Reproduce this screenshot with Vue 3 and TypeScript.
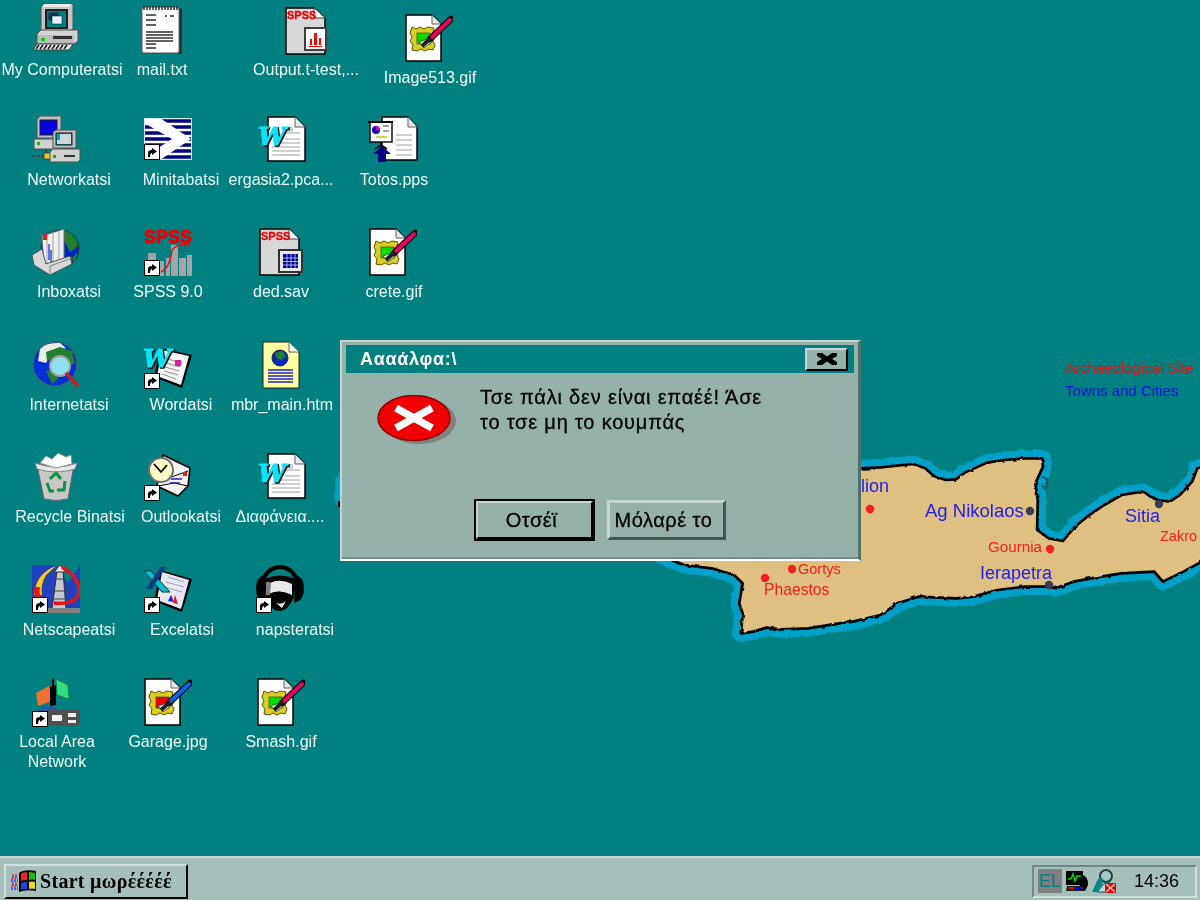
<template>
  <div class="screen">
    <!-- icon sheet, referenced with <use> below -->
    <svg class="sheet" width="0" height="0">
      <defs>
        <filter id="rough" x="-5%" y="-5%" width="110%" height="110%">
          <feTurbulence type="fractalNoise" baseFrequency="0.05" numOctaves="2" seed="4" result="n" />
          <feDisplacementMap in="SourceGraphic" in2="n" scale="9" />
        </filter>

        <symbol id="shortcut" viewBox="0 0 16 16">
          <rect x="0.5" y="0.5" width="15" height="15" fill="#fff" stroke="#000" />
          <path d="M4 13 V9 Q4 6 8 6 V4 L13 7.5 L8 11 V9 Q6 9 6 13 Z" fill="#000" />
        </symbol>

        <symbol id="computer" viewBox="0 0 48 48">
          <path d="M9 4 L12 1 H41 V26 L38 28 H9 Z" fill="#c4c4c4" stroke="#505050" />
          <path d="M12 1 H40 L37 4 H10 Z" fill="#ececec" />
          <rect x="13" y="6" width="23" height="20" fill="#202020" />
          <rect x="15" y="8" width="19" height="16" fill="#008080" />
          <rect x="17" y="10" width="9" height="7" fill="#103060" stroke="#101010" stroke-width=".5" />
          <rect x="20" y="13" width="10" height="8" fill="#e8f0ff" stroke="#101010" stroke-width=".5" />
          <path d="M5 31 L9 27 H46 V38 L42 41 H5 Z" fill="#d4d4d4" stroke="#505050" />
          <rect x="6" y="32" width="36" height="8" fill="#bcbcbc" />
          <rect x="9" y="35" width="4" height="3" fill="#00d000" />
          <rect x="21" y="33" width="19" height="3" fill="#303030" />
          <path d="M5 41 L1 47 H37 L41 41 Z" fill="#e4e4e4" stroke="#404040" />
          <path d="M7 42 L4 46 M11 42 L8 46 M15 42 L12 46 M19 42 L16 46 M23 42 L20 46 M27 42 L24 46 M31 42 L28 46 M35 42 L32 46" stroke="#202020" stroke-width="1.6" />
        </symbol>

        <symbol id="notepad" viewBox="0 0 42 50">
          <rect x="3" y="3" width="38" height="46" rx="2" fill="#303030" />
          <rect x="1" y="2" width="37" height="46" rx="2" fill="#fff" stroke="#606060" />
          <path d="M3 1 V5 M6 1 V5 M9 1 V5 M12 1 V5 M15 1 V5 M18 1 V5 M21 1 V5 M24 1 V5 M27 1 V5 M30 1 V5 M33 1 V5 M36 1 V5" stroke="#202020" stroke-width="1.4" />
          <path d="M5 10 H15 M5 15 H15 M5 20 H15 M5 27 H32 M5 30 H32 M5 33 H32 M5 36 H32 M5 39 H15 M5 43 H15" stroke="#303030" stroke-width="1.6" />
          <path d="M24 11 H26 M29 11 H33" stroke="#303030" stroke-width="1.6" />
        </symbol>

        <symbol id="network" viewBox="0 0 50 48">
          <path d="M6 3 L9 0 H30 V22 H6 Z" fill="#c0c0c0" stroke="#505050" />
          <rect x="9" y="4" width="17" height="15" fill="#0000e0" stroke="#202020" />
          <rect x="3" y="23" width="27" height="10" fill="#d0d0d0" stroke="#505050" />
          <rect x="6" y="26" width="3" height="3" fill="#00c000" />
          <path d="M15 33 V39" stroke="#404040" stroke-width="2" />
          <path d="M1 40 H14 M20 40 H24" stroke="#404040" stroke-width="2" stroke-dasharray="2 1" />
          <rect x="13" y="37" width="7" height="6" fill="#e8d020" stroke="#404040" />
          <path d="M22 16 L25 14 H45 V32 H22 Z" fill="#c0c0c0" stroke="#505050" />
          <rect x="25" y="17" width="16" height="12" fill="#008080" stroke="#202020" />
          <rect x="26" y="18" width="14" height="10" fill="#c8d8d8" />
          <rect x="26" y="18" width="3" height="6" fill="#00a8a8" />
          <path d="M19 36 L22 33 H49 V44 L47 46 H19 Z" fill="#d0d0d0" stroke="#505050" />
          <rect x="22" y="39" width="3" height="3" fill="#00c000" />
          <rect x="33" y="39" width="11" height="2" fill="#303030" />
        </symbol>

        <symbol id="minitab" viewBox="0 0 48 42">
          <rect x="0" y="0" width="48" height="42" fill="#fff" />
          <path d="M1 3 H47 M1 9 H47 M1 15 H47 M1 21 H47 M1 27 H47 M1 33 H47 M1 39 H47" stroke="#000080" stroke-width="3.6" />
          <path d="M0 0 H16 L47 21 L16 42 H0 V39 L28 21 L0 5 Z" fill="#fff" />
          <rect x="0.5" y="0.5" width="47" height="41" fill="none" stroke="#d8e8e8" />
        </symbol>

        <symbol id="spss-chart" viewBox="0 0 42 48">
          <path d="M1 1 H29 L40 11 V47 H1 Z" fill="#d8d8d8" stroke="#000" stroke-width="1.5" />
          <path d="M29 1 V11 H40" fill="#fff" stroke="#404040" />
          <text x="2" y="12" class="spss-word">SPSS</text>
          <rect x="20" y="21" width="21" height="22" fill="#fff" stroke="#404040" stroke-width="2" />
          <path d="M25 38 V32 H27 V38 Z M29 38 V26 H32 V38 Z M34 38 V31 H36 V38 Z M24 39 H37 V40 H24 Z" fill="#f00" />
        </symbol>

        <symbol id="spss-table" viewBox="0 0 44 48">
          <path d="M1 1 H30 L40 11 V47 H1 Z" fill="#d8d8d8" stroke="#000" stroke-width="1.5" />
          <path d="M30 1 V11 H40" fill="#fff" stroke="#404040" />
          <text x="2" y="12" class="spss-word">SPSS</text>
          <rect x="20" y="22" width="23" height="22" fill="#e8e8e8" stroke="#303030" stroke-width="2" />
          <rect x="24" y="26" width="15" height="14" fill="#000090" />
          <path d="M24 30 H39 M24 33.5 H39 M24 37 H39 M28 26 V40 M32 26 V40 M36 26 V40" stroke="#c8d0ff" stroke-width=".8" />
        </symbol>

        <symbol id="word-doc" viewBox="0 0 48 46">
          <path d="M10 1 H37 L47 11 V45 H10 Z" fill="#fff" stroke="#000" stroke-width="1.5" />
          <path d="M37 1 V11 H47" fill="#e8e8e8" stroke="#606060" />
          <path d="M27 17 H42 M27 23 H42 M20 27 H42 M14 31 H42 M14 35 H42 M14 39 H42" stroke="#a0a0a0" />
          <rect x="29" y="11" width="6" height="6" fill="#d0d0d0" />
          <text x="1.2" y="30.2" class="word-w word-w--back">W</text>
          <text x="0" y="29" class="word-w">W</text>
        </symbol>

        <symbol id="pps" viewBox="0 0 50 46">
          <path d="M14 1 H40 L49 11 V44 H14 Z" fill="#fff" stroke="#000" stroke-width="1.5" />
          <path d="M40 1 V11 H49" fill="#e8e8e8" stroke="#606060" />
          <path d="M28 19 H44 M28 24 H44 M28 29 H44 M28 34 H44 M28 39 H44" stroke="#a0a0a0" />
          <rect x="2" y="6" width="22" height="20" fill="#fff" stroke="#000" stroke-width="1.4" />
          <path d="M0 6 H25" stroke="#000" stroke-width="2" />
          <circle cx="8" cy="14" r="4" fill="#2000c0" />
          <path d="M8 14 V10 A4 4 0 0 1 12 14 Z" fill="#e000c0" />
          <path d="M15 10 H21 M15 15 H21" stroke="#808080" stroke-width="1.4" />
          <path d="M8 21 H19" stroke="#c0c000" stroke-width="1.4" />
          <path d="M13 26 V31 M7 33 L13 29 L19 33" stroke="#000" stroke-width="1.6" fill="none" />
          <path d="M14 30 L23 38 H18 V46 H10 V38 H5 Z" fill="#000080" />
        </symbol>

        <symbol id="frame" viewBox="0 0 48 48">
          <path d="M1 1 H27 L36 10 V47 H1 Z" fill="#fff" stroke="#000" stroke-width="1.5" />
          <path d="M27 1 V10 H36" fill="#e8e8e8" stroke="#606060" />
          <path d="M7 13 L11 15 L15 13 L19 15 L23 13 L29 14 L28 19 L30 23 L28 27 L30 31 L28 36 L24 35 L20 37 L16 35 L12 37 L7 36 L8 31 L5 27 L7 23 L5 19 Z" fill="#d8d020" stroke="#605000" />
        </symbol>

        <symbol id="image-pink" viewBox="0 0 48 48">
          <use href="#frame" width="48" height="48" />
          <rect x="12" y="19" width="13" height="11" fill="#00e000" stroke="#303000" stroke-width=".6" />
          <path d="M14 28 L25 24 L28 27 L19 34 Z" fill="#f0f0f0" stroke="#202020" stroke-width=".7" />
          <path d="M25 25 L46 5" stroke="#000" stroke-width="6.5" stroke-linecap="round" />
          <path d="M27 23 L45 6" stroke="#f00060" stroke-width="4" stroke-linecap="round" />
          <path d="M17 32 L26 24" stroke="#202020" stroke-width="4" />
        </symbol>

        <symbol id="image-blue" viewBox="0 0 48 48">
          <use href="#frame" width="48" height="48" />
          <rect x="12" y="19" width="13" height="11" fill="#f00000" stroke="#303000" stroke-width=".6" />
          <path d="M14 28 L25 24 L28 27 L19 34 Z" fill="#f0f0f0" stroke="#202020" stroke-width=".7" />
          <path d="M25 25 L46 5" stroke="#000" stroke-width="6.5" stroke-linecap="round" />
          <path d="M27 23 L45 6" stroke="#0068f0" stroke-width="4" stroke-linecap="round" />
          <path d="M17 32 L26 24" stroke="#202020" stroke-width="4" />
        </symbol>

        <symbol id="inbox" viewBox="0 0 48 48">
          <circle cx="28" cy="21" r="19" fill="#0028c0" stroke="#303030" />
          <path d="M28 2 Q44 4 46 18 L38 24 L32 12 Z" fill="#208030" />
          <path d="M40 30 L46 24 L42 36 Z" fill="#208030" />
          <path d="M10 8 L32 1 V34 L12 38 Z" fill="#f0f0f0" stroke="#707070" />
          <path d="M15 6 V36 M21 4 V36 M27 3 V35" stroke="#a0a0a0" />
          <rect x="11" y="6" width="4" height="6" fill="#e02020" />
          <path d="M17 16 V32 M19 22 V34" stroke="#2040e0" stroke-width="1.4" />
          <path d="M0 27 L10 21 L14 36 L38 28 L40 36 L18 47 L2 37 Z" fill="#d8d8d8" stroke="#505050" />
          <path d="M18 47 V38 L40 30" fill="none" stroke="#808080" />
        </symbol>

        <symbol id="spss-logo" viewBox="0 0 48 48">
          <path d="M4 25 H12 V48 H4 Z M15 33 H20 V48 H15 Z M22 30 H26 V48 H22 Z M27 17 H34 V48 H27 Z M35 30 H42 V48 H35 Z M43 27 H48 V48 H43 Z" fill="#a4a4a4" />
          <path d="M17 44 Q26 40 28 22 Q32 16 46 16" fill="none" stroke="#e01010" stroke-width="1.4" />
          <path d="M36 21 h1 M40 20 h1 M44 19 h1 M42 23 h1 M38 24 h1" stroke="#303030" />
          <text x="0" y="15" class="spss-big">SPSS</text>
        </symbol>

        <symbol id="globe" viewBox="0 0 48 48">
          <circle cx="23" cy="23" r="22" fill="#0030d8" stroke="#606060" />
          <path d="M8 8 Q14 1 28 2 L34 7 L20 12 L14 22 L6 20 Z" fill="#e8f0e8" />
          <path d="M14 11 L28 6 L40 10 L43 22 L32 28 L22 18 L15 20 Z" fill="#208030" />
          <path d="M14 30 L22 28 L26 38 L20 43 Z" fill="#208030" />
          <circle cx="28" cy="25" r="10" fill="#90e0f0" stroke="#a0a0a0" stroke-width="2" />
          <path d="M35 33 L45 44" stroke="#c02020" stroke-width="4" stroke-linecap="round" />
        </symbol>

        <symbol id="word-link" viewBox="0 0 48 48">
          <path d="M16 7 L48 14 L38 47 L10 36 Z" fill="#000" />
          <path d="M18 9 L45 15 L37 44 L13 35 Z" fill="#f4f4f4" />
          <path d="M24 18 L38 22 M22 22 L36 26 M21 26 L35 30 M20 30 L34 34 M18 33 L32 38" stroke="#909090" />
          <rect x="31" y="19" width="6" height="6" fill="#e020a0" />
          <text x="0.2" y="27.2" class="word-w word-w--back">W</text>
          <text x="-1" y="26" class="word-w">W</text>
        </symbol>

        <symbol id="html-doc" viewBox="0 0 38 48">
          <path d="M1 1 H27 L37 11 V47 H1 Z" fill="#ffffa0" stroke="#202020" />
          <path d="M27 1 V11 H37" fill="#fff" stroke="#606060" />
          <circle cx="18" cy="17" r="8" fill="#0028c8" stroke="#303030" />
          <path d="M13 12 L20 10 L24 15 L19 19 L14 17 Z" fill="#208030" />
          <path d="M6 29 H31 M6 32 H31 M6 35 H31 M6 38 H31 M6 41 H31" stroke="#2020e0" stroke-width="1.6" />
        </symbol>

        <symbol id="recycle" viewBox="0 0 44 48">
          <path d="M3 12 L40 12 L34 46 Q22 49 10 46 Z" fill="#c8c8c8" stroke="#606060" />
          <path d="M1 10 Q22 18 43 10 L41 16 Q22 22 3 16 Z" fill="#e8e8e8" stroke="#808080" />
          <path d="M6 10 L12 3 L18 6 L24 0 L32 4 L37 2 L38 11 L22 15 Z" fill="#fff" stroke="#909090" />
          <path d="M16 26 L22 20 L27 26 M31 28 L30 37 L23 37 M13 30 L16 38 L20 38" fill="none" stroke="#109040" stroke-width="3" />
        </symbol>

        <symbol id="outlook" viewBox="0 0 48 48">
          <path d="M19 2 L46 15 L44 33 L34 43 L13 33 Z" fill="#f4f4f4" stroke="#000" stroke-width="1.6" />
          <path d="M22 26 L44 18 M14 33 L30 30 L44 33" fill="none" stroke="#000" />
          <path d="M27 26 H38 M26 30 H36" stroke="#2020c0" stroke-width="1.6" />
          <rect x="39" y="19" width="4" height="4" fill="#e02020" />
          <circle cx="17" cy="17" r="12" fill="#ffffc8" stroke="#707070" stroke-width="2" />
          <path d="M10 11 L17 19 L23 12" fill="none" stroke="#000" stroke-width="1.8" />
        </symbol>

        <symbol id="netscape" viewBox="0 0 48 48">
          <rect x="0" y="0" width="48" height="48" fill="#2040c0" />
          <path d="M24 0 L48 0 L36 18 Z" fill="#008080" />
          <path d="M2 30 Q4 8 24 1 L14 10 Q8 20 10 30 Z" fill="#ffd000" />
          <path d="M2 22 Q2 40 14 42 L12 38 Q6 30 8 22 Z" fill="#f01010" />
          <path d="M20 44 L25 6 L31 6 L34 44 Z" fill="#c8c8c8" stroke="#303030" />
          <path d="M22 7 L28 0 L34 7 Z" fill="#e8e8e8" stroke="#303030" />
          <path d="M23 14 H33 M22 26 H33 M22 34 H34" stroke="#404040" />
          <path d="M30 2 Q47 12 47 26 Q46 40 22 38" fill="none" stroke="#f01010" stroke-width="3.5" />
          <rect x="0" y="43" width="48" height="5" fill="#808080" />
        </symbol>

        <symbol id="excel-link" viewBox="0 0 48 48">
          <path d="M16 5 L48 14 L38 47 L10 36 Z" fill="#000" />
          <path d="M18 7 L45 15 L37 44 L13 35 Z" fill="#e8e8f0" />
          <path d="M24 12 L40 17 M22 17 L40 22 M20 22 L38 27" stroke="#a0a0c0" />
          <path d="M24 36 L27 30 L30 37 Z" fill="#2020d0" />
          <path d="M29 38 L31 30 L34 39 Z" fill="#e02020" />
          <path d="M0 6 L7 6 L26 27 L18 27 Z" fill="#00c0d0" stroke="#003040" />
          <path d="M16 2 L22 2 L8 24 L2 24 Z" fill="#004080" />
        </symbol>

        <symbol id="napster" viewBox="0 0 48 48">
          <path d="M6 22 Q8 3 24 2 Q40 3 42 22" fill="none" stroke="#000" stroke-width="4" />
          <path d="M0 24 Q0 12 8 10 L10 38 Q0 36 0 24 Z M48 24 Q48 12 40 10 L38 38 Q48 36 48 24 Z" fill="#000" />
          <path d="M8 14 Q24 7 40 14 L38 32 Q32 46 24 46 Q14 46 10 32 Z" fill="#000" />
          <path d="M14 18 Q24 13 36 19 L36 30 Q24 24 12 29 Z" fill="#e8e8e8" />
          <path d="M10 17 Q13 16 15 18 L14 30 L10 30 Z" fill="#808080" />
          <path d="M16 28 Q24 24 34 30 L26 34 Z" fill="#000" />
          <path d="M20 38 Q26 40 30 36 L26 43 Z" fill="#e8e8e8" />
        </symbol>

        <symbol id="lan" viewBox="0 0 48 50">
          <path d="M4 16 L17 9 L20 24 L6 29 Z" fill="#f07030" />
          <path d="M5 31 L19 27 L26 32 L12 38 Z" fill="#2060a0" />
          <path d="M18 10 L24 8 V28 L18 29 Z" fill="#000" />
          <path d="M24 2 L36 8 L37 22 L25 18 Z" fill="#30e080" stroke="#006030" stroke-width=".6" />
          <path d="M20 3 L22 1 V26 H20 Z" fill="#000" />
          <rect x="16" y="33" width="32" height="16" rx="2" fill="#505050" />
          <path d="M20 38 H30 V44 H20 Z M36 36 H44 V40 H36 Z M36 43 H44 V46 H36 Z" fill="#f0f0f0" />
        </symbol>

        <symbol id="win-flag" viewBox="0 0 26 24">
          <path d="M1 6 H7 M0 10 H7 M1 14 H7 M0 18 H7" stroke="#ff2020" stroke-width="1.5" stroke-dasharray="2 1" />
          <path d="M1 8 H7 M0 12 H7 M1 16 H7 M0 20 H7" stroke="#2040f0" stroke-width="1.5" stroke-dasharray="2 1" />
          <path d="M8 4 Q13 0 25 2 V22 Q15 20 8 23 Z" fill="#000" />
          <path d="M10 5 Q12 3 16 3 V11 Q12 11 10 12 Z" fill="#ff2020" />
          <path d="M18 3 Q21 3 24 4 V11 Q21 10 18 11 Z" fill="#10c010" />
          <path d="M10 14 Q12 13 16 13 V20 Q12 20 10 21 Z" fill="#2040f0" />
          <path d="M18 13 Q21 12 24 13 V20 Q21 19 18 20 Z" fill="#f0e000" />
        </symbol>
      </defs>
    </svg>

    <main class="desktop">
      <!-- Crete wallpaper -->
      <svg class="wallpaper" viewBox="330 350 870 300">
        <text x="1065" y="373" class="legend" fill="#f01010">Archaeological Site</text>
        <text x="1065" y="396" class="legend" fill="#1010e0">Towns and Cities</text>
        <g transform="translate(660 440) scale(.3444 .3333)" filter="url(#rough)">
          <path :d="coast" fill="none" stroke="#00a0c8" stroke-width="50" stroke-linejoin="round" />
          <path :d="coast" fill="#e0c080" stroke="#000" stroke-width="8" stroke-linejoin="round" />
          <path d="M1108 110 q22 5 18 28 q-12 12 -18 -4" fill="none" stroke="#304050" stroke-width="4" />
        </g>
        <rect x="338" y="501" width="3" height="6" fill="#000" />
        <text v-for="t in places" :key="t.name" :x="t.x" :y="t.y" :fill="t.color" :font-size="t.size" class="place">{{ t.name }}</text>
        <circle v-for="d in dots" :key="d.x" :cx="d.x" :cy="d.y" r="4.2" :fill="d.color" />
      </svg>

      <template v-for="it in items" :key="it.name">
        <svg class="icon" :style="{ left: it.x + 'px', top: it.y + 'px', width: it.w + 'px', height: it.h + 'px' }">
          <use :href="'#' + it.icon" :width="it.w" :height="it.h" />
          <use v-if="it.link" href="#shortcut" x="0" :y="it.h - 16" width="16" height="16" />
        </svg>
        <div class="label" :style="{ left: it.cx + 'px', top: it.ly - 10 + 'px' }">{{ it.name }}</div>
      </template>

      <section class="dialog">
        <header class="dialog-title">
          <span>Αααάλφα:\</span>
          <button class="close-btn" aria-label="close">
            <svg viewBox="0 0 20 12" width="20" height="12">
              <path d="M0 0 H5 L10 3.5 L15 0 H20 V3 L15 6 L20 9 V12 H15 L10 8.5 L5 12 H0 V9 L5 6 L0 3 Z" fill="#000" />
            </svg>
          </button>
        </header>
        <div class="dialog-body">
          <svg class="error-icon" viewBox="0 0 80 50" width="80" height="50">
            <ellipse cx="42" cy="26" rx="37" ry="23" fill="#808080" />
            <ellipse cx="37" cy="23" rx="36" ry="22.5" fill="#f00000" stroke="#900000" stroke-width="1.5" />
            <path d="M19 13 L55 33 M55 13 L19 33" stroke="#fff" stroke-width="7.5" />
          </svg>
          <p class="dialog-text">Τσε πάλι δεν είναι επαέέ! Άσε<br />το τσε μη το κουμπάς</p>
        </div>
        <div class="dialog-actions">
          <button class="btn btn--default">Οτσέϊ</button>
          <button class="btn">Μόλαρέ το</button>
        </div>
      </section>
    </main>

    <footer class="taskbar">
      <button class="start">
        <svg width="26" height="24"><use href="#win-flag" width="26" height="24" /></svg>
        <span>Start μωρέέέέέ</span>
      </button>
      <div class="tray">
        <span class="lang">EL</span>
        <svg class="tray-icon" viewBox="0 0 24 24" width="24" height="24">
          <path d="M16 5 Q24 8 23 16 L20 22 H14 Z" fill="#000" />
          <rect x="1" y="2" width="17" height="14" fill="#000" />
          <path d="M3 10 H6 L8 5 L10 12 L12 7 H16" fill="none" stroke="#00e000" stroke-width="1.4" />
          <path d="M2 17 H18 L20 22 H1 Z" fill="#202020" />
          <rect x="4" y="18" width="5" height="2" fill="#f00000" />
          <rect x="11" y="18" width="5" height="2" fill="#0000f0" />
        </svg>
        <svg class="tray-icon" viewBox="0 0 24 24" width="24" height="24">
          <circle cx="14" cy="7" r="6" fill="#a8c8c4" stroke="#204040" stroke-width="2" />
          <path d="M0 23 L6 10 Q9 8 11 10 L10 16 L5 23 Z" fill="#008888" />
          <path d="M5 23 L12 15 Q17 12 21 16 L24 23 Z" fill="#c0d8d4" stroke="#006060" />
          <rect x="13" y="14" width="11" height="10" fill="#f00000" />
          <path d="M14 15 L23 23 M23 15 L14 23" stroke="#d0d0d0" stroke-width="1.4" />
        </svg>
        <span class="clock">14:36</span>
      </div>
    </footer>
  </div>
</template>

<script setup lang="ts">
interface DesktopItem {
  name: string
  icon: string
  x: number
  y: number
  w: number
  h: number
  cx: number
  ly: number
  link?: boolean
}

const items: DesktopItem[] = [
  { name: 'My Computeratsi', icon: 'computer', x: 32, y: 3, w: 48, h: 48, cx: 62, ly: 70 },
  { name: 'Networkatsi', icon: 'network', x: 31, y: 116, w: 50, h: 48, cx: 69, ly: 180 },
  { name: 'Inboxatsi', icon: 'inbox', x: 32, y: 228, w: 48, h: 48, cx: 69, ly: 292 },
  { name: 'Internetatsi', icon: 'globe', x: 32, y: 341, w: 48, h: 48, cx: 69, ly: 405 },
  { name: 'Recycle Binatsi', icon: 'recycle', x: 34, y: 453, w: 44, h: 48, cx: 70, ly: 517 },
  { name: 'Netscapeatsi', icon: 'netscape', x: 32, y: 565, w: 48, h: 48, cx: 69, ly: 630, link: true },
  { name: 'Local Area\nNetwork', icon: 'lan', x: 32, y: 677, w: 48, h: 50, cx: 57, ly: 742, link: true },

  { name: 'mail.txt', icon: 'notepad', x: 141, y: 5, w: 42, h: 50, cx: 162, ly: 70 },
  { name: 'Minitabatsi', icon: 'minitab', x: 144, y: 118, w: 48, h: 42, cx: 181, ly: 180, link: true },
  { name: 'SPSS 9.0', icon: 'spss-logo', x: 144, y: 228, w: 48, h: 48, cx: 168, ly: 292, link: true },
  { name: 'Wordatsi', icon: 'word-link', x: 144, y: 341, w: 48, h: 48, cx: 181, ly: 405, link: true },
  { name: 'Outlookatsi', icon: 'outlook', x: 144, y: 453, w: 48, h: 48, cx: 181, ly: 517, link: true },
  { name: 'Excelatsi', icon: 'excel-link', x: 144, y: 565, w: 48, h: 48, cx: 182, ly: 630, link: true },
  { name: 'Garage.jpg', icon: 'image-blue', x: 144, y: 678, w: 48, h: 48, cx: 168, ly: 742 },

  { name: 'Output.t-test,...', icon: 'spss-chart', x: 285, y: 7, w: 42, h: 48, cx: 306, ly: 70 },
  { name: 'ergasia2.pca...', icon: 'word-doc', x: 258, y: 116, w: 48, h: 46, cx: 281, ly: 180 },
  { name: 'ded.sav', icon: 'spss-table', x: 259, y: 228, w: 44, h: 48, cx: 281, ly: 292 },
  { name: 'mbr_main.htm', icon: 'html-doc', x: 262, y: 341, w: 38, h: 48, cx: 282, ly: 405 },
  { name: 'Διαφάνεια....', icon: 'word-doc', x: 258, y: 453, w: 48, h: 46, cx: 280, ly: 517 },
  { name: 'napsteratsi', icon: 'napster', x: 256, y: 565, w: 48, h: 48, cx: 295, ly: 630, link: true },
  { name: 'Smash.gif', icon: 'image-pink', x: 257, y: 678, w: 48, h: 48, cx: 281, ly: 742 },

  { name: 'Image513.gif', icon: 'image-pink', x: 405, y: 14, w: 48, h: 48, cx: 430, ly: 78 },
  { name: 'Totos.pps', icon: 'pps', x: 368, y: 116, w: 50, h: 46, cx: 394, ly: 180 },
  { name: 'crete.gif', icon: 'image-pink', x: 369, y: 228, w: 48, h: 48, cx: 394, ly: 292 },
]

const red = '#f02020'
const blue = '#2020f0'
const dark = '#3a3a50'

const places = [
  { name: 'Heraklion', x: 813, y: 492, color: blue, size: 18 },
  { name: 'Ag Nikolaos', x: 925, y: 517, color: blue, size: 18.5 },
  { name: 'Sitia', x: 1125, y: 522, color: blue, size: 18 },
  { name: 'Ierapetra', x: 980, y: 579, color: blue, size: 18 },
  { name: 'Gournia', x: 988, y: 552, color: red, size: 15.2 },
  { name: 'Zakro', x: 1160, y: 541, color: red, size: 14.5 },
  { name: 'Gortys', x: 798, y: 574, color: red, size: 14.5 },
  { name: 'Phaestos', x: 764, y: 595, color: red, size: 15.7 },
]

const dots = [
  { x: 870, y: 509, color: red },
  { x: 1050, y: 549, color: red },
  { x: 792, y: 569, color: red },
  { x: 765, y: 578, color: red },
  { x: 1030, y: 511, color: dark },
  { x: 1049, y: 585, color: dark },
  { x: 1159, y: 504, color: dark },
]

// coastline, in the 3x units of the crop that starts at (660,440)
const coast =
  'M-700 60 L585 85 L640 82 L735 72 L770 85 L795 108 L830 120 L860 118 L885 98 L950 68 L1000 60 L1060 55 L1110 55 L1112 80 ' +
  'L1090 130 L1097 180 L1095 270 L1130 295 L1170 303 L1205 260 L1240 230 L1290 195 L1340 165 L1400 155 L1445 180 L1480 185 ' +
  'L1510 165 L1545 125 L1560 85 L1600 75 L1600 350 L1520 395 L1460 425 L1435 395 L1340 400 L1280 410 L1200 425 L1150 445 ' +
  'L1130 440 L1060 440 L980 450 L910 470 L860 475 L750 470 L690 490 L640 525 L560 545 L520 550 L430 565 L350 568 L310 563 ' +
  'L270 575 L235 580 L240 520 L230 490 L240 430 L215 405 L150 385 L70 375 L10 350 L-40 320 L-800 240 L-880 215 L-918 180 L-918 120 L-880 70 Z'
</script>

<style scoped>
.screen {
  width: 1200px;
  height: 900px;
  display: flex;
  flex-direction: column;
  overflow: hidden;
  font-family: "Liberation Sans", Arial, sans-serif;
  filter: blur(0.45px);
}

.sheet {
  position: absolute;
}

.desktop {
  position: relative;
  flex: 1;
  background: #008080;
}

.wallpaper {
  position: absolute;
  left: 330px;
  top: 350px;
  width: 870px;
  height: 300px;
}

.legend {
  font-size: 15px;
}

.place {
  font-family: "Liberation Sans", Arial, sans-serif;
}

.spss-word {
  font: bold 11px "Liberation Sans", sans-serif;
  fill: #f00000;
  stroke: #f00000;
  stroke-width: 0.3px;
}

.spss-big {
  font: bold 18px "Liberation Sans", sans-serif;
  fill: #f00000;
  stroke: #f00000;
  stroke-width: 0.8px;
}

.word-w {
  font: italic bold 25px "DejaVu Serif", serif;
  fill: #00e8f8;
  stroke: #00e8f8;
  stroke-width: 1px;
}

.word-w--back {
  fill: #000;
  stroke: #000;
  stroke-width: 1.4px;
}

.icon {
  position: absolute;
  overflow: visible;
}

.label {
  position: absolute;
  transform: translateX(-50%);
  font-size: 16px;
  line-height: 20px;
  color: #f0fafa;
  text-align: center;
  white-space: pre;
}

.dialog {
  position: absolute;
  left: 340px;
  top: 340px;
  width: 521px;
  height: 221px;
  box-sizing: border-box;
  display: flex;
  flex-direction: column;
  padding: 3px 4px 0 4px;
  background: #94b2aa;
  border-top: 2px solid #c5d6d2;
  border-left: 2px solid #c5d6d2;
  border-right: 3px solid #4f716a;
  border-bottom: 2px solid #fff;
  box-shadow: inset 0 -2px 0 #6d8f87;
}

.dialog-title {
  height: 28px;
  flex: none;
  display: flex;
  align-items: center;
  justify-content: space-between;
  padding: 0 6px 0 14px;
  background: #008080;
  color: #fff;
  font-size: 18px;
  font-weight: bold;
  letter-spacing: 0.7px;
}

.close-btn {
  width: 43px;
  height: 23px;
  padding: 0;
  display: flex;
  align-items: center;
  justify-content: center;
  background: #94b2aa;
  border: 2px solid;
  border-color: #c5d6d2 #000 #000 #c5d6d2;
}

.dialog-body {
  flex: 1;
  display: flex;
  padding: 20px 0 0 31px;
}

.error-icon {
  flex: none;
  margin-top: 2px;
}

.dialog-text {
  margin: -8px 0 0 23px;
  font-size: 20px;
  line-height: 25px;
  color: #000;
  letter-spacing: 0.8px;
  -webkit-text-stroke: 0.3px #000;
}

.dialog-actions {
  display: flex;
  gap: 13px;
  padding: 0 0 19px 129px;
}

.btn {
  width: 119px;
  height: 40px;
  padding: 0 6px 0 0;
  box-sizing: border-box;
  background: #94b2aa;
  border: 3px solid;
  border-color: #c5d6d2 #3a5a54 #3a5a54 #c5d6d2;
  font-family: inherit;
  font-size: 20px;
  letter-spacing: 0.5px;
  -webkit-text-stroke: 0.3px #000;
  color: #000;
}

.btn--default {
  outline: 2px solid #000;
  outline-offset: -1px;
  border-color: #c5d6d2 #000 #000 #c5d6d2;
}

.taskbar {
  height: 44px;
  flex: none;
  box-sizing: border-box;
  display: flex;
  align-items: center;
  justify-content: space-between;
  padding: 4px 3px 0 4px;
  background: #a5c0bb;
  border-top: 2px solid #c5d8d4;
}

.start {
  width: 184px;
  height: 35px;
  padding: 0 0 0 5px;
  box-sizing: border-box;
  display: flex;
  align-items: center;
  gap: 3px;
  background: #a5c0bb;
  border: 2px solid;
  border-color: #cfe0dc #000 #000 #cfe0dc;
  font-family: "Liberation Serif", serif;
  font-size: 20px;
  font-weight: bold;
  letter-spacing: 0.3px;
  color: #000;
}

.tray {
  width: 165px;
  height: 33px;
  box-sizing: border-box;
  display: flex;
  align-items: center;
  padding: 0 0 0 4px;
  gap: 3px;
  border: 2px solid;
  border-color: #6d8a85 #cfe0dc #cfe0dc #6d8a85;
}

.lang {
  width: 24px;
  height: 24px;
  background: #808080;
  color: #008080;
  font-size: 18px;
  line-height: 24px;
  text-align: center;
}

.tray-icon {
  flex: none;
}

.clock {
  margin-left: 15px;
  font-size: 18px;
  color: #000;
}
</style>
